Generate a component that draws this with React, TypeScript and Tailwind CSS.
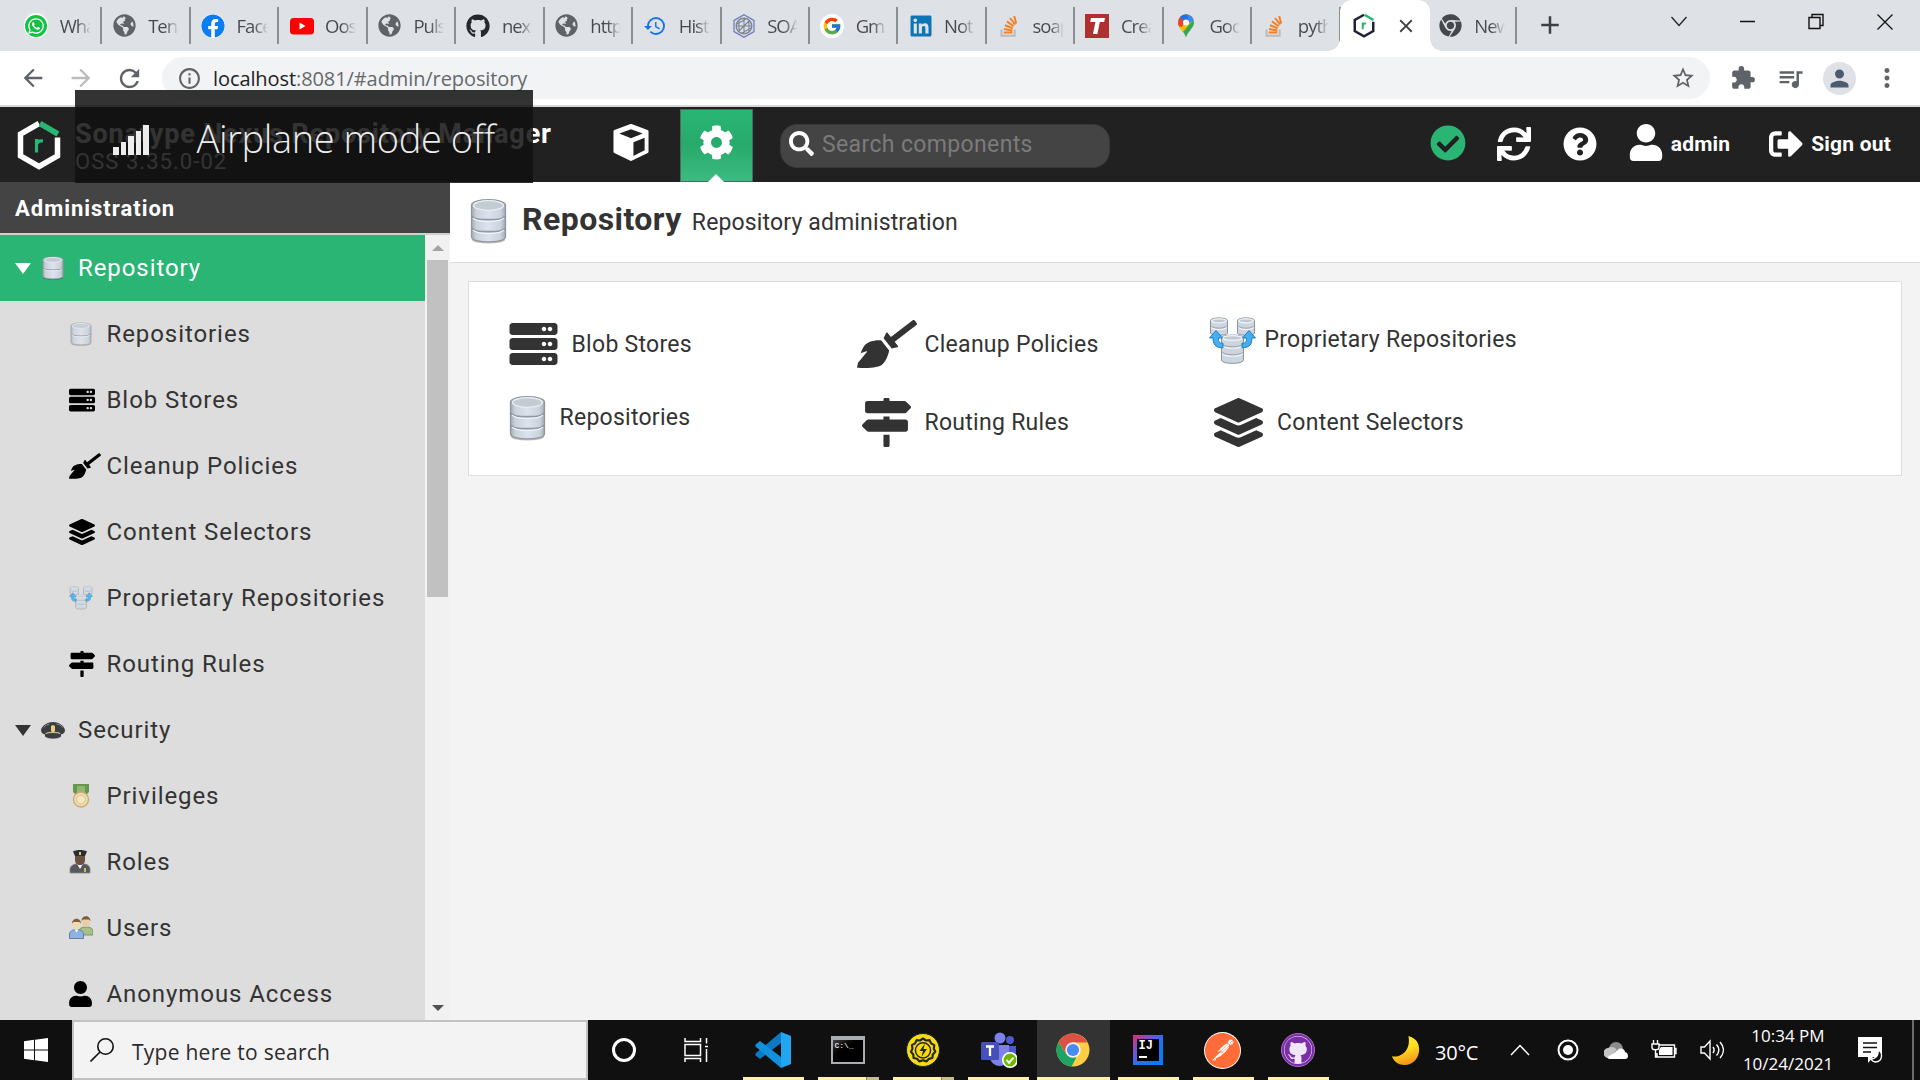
import React from 'react';
import { FaServer, FaBroom, FaMapSigns, FaLayerGroup, FaUser, FaCog, FaSearch, FaCheckCircle, FaSync, FaQuestionCircle, FaSignOutAlt, FaFacebook, FaGithub, FaWhatsapp, FaLinkedin, FaChrome, FaGlobeAmericas } from 'react-icons/fa';
import { MdHistory, MdExtension, MdQueueMusic, MdStarBorder, MdPerson, MdMoreVert, MdArrowBack, MdArrowForward, MdRefresh, MdInfoOutline, MdClose, MdAdd } from 'react-icons/md';
import { FcGoogle } from 'react-icons/fc';
import { SiPostman } from 'react-icons/si';

/* ---------- favicons ---------- */

function WhatsAppIcon() {
  return (
    <span className="flex size-[25px] items-center justify-center rounded-full bg-white">
      <span className="flex size-[22px] items-center justify-center rounded-full bg-[#12c244]">
        <FaWhatsapp className="size-[18px] text-white" />
      </span>
    </span>
  );
}

function YoutubeIcon() {
  return (
    <svg viewBox="0 0 24 24" className="size-6">
      <rect y="4" width="24" height="16.5" rx="3.5" fill="#f00" />
      <path d="M9.5 8.5v7l6-3.5z" fill="#fff" />
    </svg>
  );
}

function StackIcon() {
  return (
    <svg viewBox="0 0 24 24" className="size-6" fill="none" strokeWidth="2">
      <path d="M4.5 15.5v6.3h13.2v-6.3" stroke="#bcbbbb" />
      <path d="M6.8 18.6h8.6M7 15l8.4 1.4M7.9 11.2l7.8 3M9.9 7.4l6.8 4.8M13 4l5.2 6.7M17.2 2l2 7.6" stroke="#f48024" />
    </svg>
  );
}

function SoapIcon() {
  return (
    <svg viewBox="0 0 24 24" className="size-6" fill="none">
      <path d="M12 .8 22 6.4v11.2L12 23.2 2 17.6V6.4z" stroke="#6a78b8" strokeWidth="1.2" fill="#d9def0" />
      <circle cx="12" cy="12" r="7.8" stroke="#7f858c" strokeWidth="1.4" />
      <path d="M7 6.5v11M12 4.5v15M17 6.5v11M4.5 12h15M7 17l10-10M5 10l9-5M10 19l9-5" stroke="#7f858c" strokeWidth="1.1" />
    </svg>
  );
}

function RedTIcon() {
  return (
    <svg viewBox="0 0 24 24" className="size-6">
      <rect width="24" height="24" fill="#b03030" />
      <path d="M6 4h14l-.8 4h-4.4l-2.4 12H8l2.4-12H5.2z" fill="#fff" />
    </svg>
  );
}

function MapsIcon() {
  return (
    <svg viewBox="0 0 24 24" className="size-6">
      <defs>
        <clipPath id="pin">
          <path d="M12 .5a8 8 0 0 1 8 8c0 3-1.6 5-3.6 7.6-1.800 2.300-3.200 4.100-4.400 7.400-1.200-3.300-2.600-5.100-4.400-7.400C5.600 13.500 4 11.500 4 8.500a8 8 0 0 1 8-8z" />
        </clipPath>
      </defs>
      <g clipPath="url(#pin)">
        <rect width="24" height="24" fill="#34a853" />
        <path d="M0 0h24L4 24H0z" fill="#fbbc04" />
        <path d="M0 0h14L8 13 0 11z" fill="#ea4335" />
        <path d="M8 0h16v3L12 9 6 3z" fill="#1a73e8" />
        <path d="M13 0h11v4l-9 5z" fill="#4285f4" />
      </g>
      <circle cx="12" cy="8.500" r="3" fill="#fff" />
    </svg>
  );
}

function NexusMark({ dark = false, className }: { dark?: boolean; className: string }) {
  const main = dark ? '#20223a' : '#fff';
  return (
    <svg viewBox="0 0 44 50" className={className} fill="none">
      <path d="M22 3.500 3.500 14v22L22 46.500 40.500 36V17.500" stroke={main} strokeWidth={dark ? 5 : 5.500} />
      <path d="M23 3.500 41 14" stroke="#2ab574" strokeWidth={dark ? 5 : 5.500} />
      <path d="M19.500 32.500V19M19.500 25c.5-3 3-4.500 6.500-4" stroke="#2ab574" strokeWidth={dark ? 4 : 3.200} />
    </svg>
  );
}

const globe = <FaGlobeAmericas className="size-[23px] shrink-0 text-[#5f6368]" />;

const tabs = [
  { t: 'Wha', icon: <WhatsAppIcon /> },
  { t: 'Tena', icon: globe },
  { t: 'Face', icon: <FaFacebook className="size-6 rounded-full bg-white text-[#0a7cf5]" /> },
  { t: 'Oost', icon: <YoutubeIcon /> },
  { t: 'Puls', icon: globe },
  { t: 'nex', icon: <FaGithub className="size-6 text-[#24292e]" /> },
  { t: 'http', icon: globe },
  { t: 'Hist', icon: <MdHistory className="size-[24px] text-[#1a73e8]" /> },
  { t: 'SOA', icon: <SoapIcon /> },
  { t: 'Gm', icon: <span className="flex size-6 items-center justify-center rounded-full bg-white"><FcGoogle className="size-[20px]" /></span> },
  { t: 'Not', icon: <FaLinkedin className="size-6 text-[#0a76b5]" /> },
  { t: 'soap', icon: <StackIcon /> },
  { t: 'Crea', icon: <RedTIcon /> },
  { t: 'Goo', icon: <MapsIcon /> },
  { t: 'pyth', icon: <StackIcon /> },
];

function Tab({ t, icon }: { t: string; icon: React.ReactNode }) {
  return (
    <div className="flex h-[51px] w-[88.450px] shrink-0 items-center pl-[24.200px]">
      <span className="flex size-6 shrink-0 items-center justify-center">{icon}</span>
      <span className="ml-[11.500px] w-[31px] overflow-hidden whitespace-nowrap bg-linear-to-r from-[#45494d] from-55% to-transparent bg-clip-text text-[18.500px] tracking-[-1px] text-transparent">{t}</span>
      <span className="ml-auto -mr-[14px] h-[37px] w-[2px] shrink-0 bg-[#8b8f94]" />
    </div>
  );
}

function BrowserChrome() {
  return (
    <div className="font-['Open_Sans',sans-serif]">
      <div className="flex h-[51px] bg-[#dee1e6]">
        {tabs.map((x, i) => <Tab key={i} {...x} />)}
        <div className="relative ml-[13px] flex h-[51px] w-[90px] shrink-0 items-center rounded-t-[12px] bg-white pl-[12px]">
          <NexusMark dark className="h-[25px] w-6" />
          <MdClose className="ml-[19px] size-[22px] text-[#3c4043]" />
          <span className="absolute -left-3 bottom-0 size-3 bg-[radial-gradient(circle_at_0_0,transparent_11.500px,white_12px)]" />
          <span className="absolute -right-3 bottom-0 size-3 bg-[radial-gradient(circle_at_100%_0,transparent_11.500px,white_12px)]" />
        </div>
        <div className="-ml-[15px] flex"><Tab t="New" icon={<FaChrome className="size-[23px] text-[#45494d]" />} /></div>
        <MdAdd className="ml-[32px] mt-[10px] size-[30px] text-[#3c4043]" />
        <div className="ml-auto flex pt-[11px]">
          <svg viewBox="0 0 20 20" className="mr-[48px] size-5" fill="none" stroke="#222" strokeWidth="1.300"><path d="m2.500 6 7.500 8.500L17.500 6" /></svg>
          <svg viewBox="0 0 20 20" className="mr-[49px] size-5" fill="none" stroke="#111" strokeWidth="1.500"><path d="M3 10.500h15" /></svg>
          <svg viewBox="0 0 20 20" className="mr-[49px] size-5" fill="none" stroke="#111" strokeWidth="1.400"><path d="M3 6.500h11v11H3zM6 6.500v-3h11v11h-3" /></svg>
          <svg viewBox="0 0 20 20" className="mr-[25px] size-5" fill="none" stroke="#111" strokeWidth="1.300"><path d="m2.500 3.500 15 15m0-15-15 15" /></svg>
        </div>
      </div>
      <div className="flex h-[54px] items-center bg-white text-[#5f6368]">
        <MdArrowBack className="ml-[19px] size-[28px]" />
        <MdArrowForward className="ml-[20px] size-[28px] text-[#b9bbbe]" />
        <MdRefresh className="ml-[20px] size-[29px]" />
        <div className="ml-[18px] flex h-[42px] w-[1548px] items-center rounded-full bg-[#f1f3f4]">
          <MdInfoOutline className="ml-[15px] size-[25px]" />
          <span className="ml-[11px] mt-px text-[20px] tracking-[-0.090px] text-[#66696d]"><span className="text-[#202124]">localhost</span>:8081/#admin/repository</span>
          <MdStarBorder className="ml-auto mr-[14px] size-[26px]" />
        </div>
        <MdExtension className="ml-[20px] size-[26px]" />
        <MdQueueMusic className="ml-[20px] size-[29px]" />
        <span className="ml-[18px] flex size-[33px] items-center justify-center rounded-full bg-[#dee1e6]"><MdPerson className="size-[27px] text-[#4e5a70]" /></span>
        <MdMoreVert className="ml-[16px] size-[30px]" />
      </div>
      <div className="h-[2px] bg-[#d8d8d8]" />
    </div>
  );
}

/* ---------- application header ---------- */

function CubeIcon() {
  return (
    <svg viewBox="0 0 38 38" className="h-[37px] w-[38px]">
      <path d="M19 1.500 35.500 7.500v21L19 36.500 2.500 28.500v-21z" fill="#fff" stroke="#fff" strokeWidth="3" strokeLinejoin="round" />
      <path d="m19 5.500 12 4.300L19 14.600 7 9.800z" fill="#212121" />
      <path d="M21.500 18.800 33 14v13l-11.500 5.800z" fill="#212121" />
    </svg>
  );
}

function AppHeader() {
  return (
    <header className="flex h-[75px] items-center bg-[#212121] text-white">
      <NexusMark className="ml-[17px] h-[50px] w-[44px]" />
      <div className="ml-[14px] mt-[4px] w-[520px] whitespace-nowrap">
        <div className="text-[27px] leading-[30px] font-bold tracking-[0.840px]">Sonatype Nexus Repository Manager</div>
        <div className="text-[22px] leading-[25px] tracking-[1.050px]">OSS 3.35.0-02</div>
      </div>
      <div className="ml-[17px] -mt-[4px]"><CubeIcon /></div>
      <div className="relative ml-[30px] mt-px flex h-[73px] w-[73px] items-center justify-center border border-[#4d6b5d] bg-linear-to-b from-[#2ab574] via-[#27aa6c] to-[#3dbb82] pr-px pb-[5px]">
        <FaCog className="size-[35px]" />
        <svg viewBox="0 0 16 8" className="absolute -bottom-[1px] left-[27px] h-2 w-4"><path d="M0 8 8 0l8 8z" fill="#fff" /></svg>
      </div>
      <div className="ml-[27px] mt-[2px] flex h-[44px] w-[330px] items-center rounded-[17px] border border-[#383838] bg-[#444]">
        <FaSearch className="ml-[8px] -mt-[5px] size-[25px]" />
        <span className="ml-[8px] text-[23px] tracking-[0.360px] text-[#7b7b7b]">Search components</span>
      </div>
      <FaCheckCircle className="ml-auto -mt-[4px] size-[36px] text-[#2ab574]" />
      <FaSync className="ml-[31px] -mt-[2px] size-[34px]" />
      <FaQuestionCircle className="ml-[32px] -mt-[2px] size-[34px]" />
      <FaUser className="ml-[31px] -mt-[4px] h-[37px] w-[36px]" />
      <span className="ml-[7px] mt-[1px] text-[21px] font-bold tracking-[0.150px]">admin</span>
      <FaSignOutAlt className="ml-[39px] -mt-[2px] size-[34px]" />
      <span className="ml-[8px] mr-[29px] mt-[1px] text-[21px] font-bold tracking-[0.200px]">Sign out</span>
    </header>
  );
}

/* ---------- drawn icons of the feature list ---------- */

function Database({ className, bands = 3 }: { className: string; bands?: number }) {
  const h = bands === 3 ? 12 : 17;
  const top = [...Array(bands).keys()];
  return (
    <svg viewBox="0 0 36 46" preserveAspectRatio="none" className={className}>
      <defs>
        <linearGradient id="metal" x1="0" x2="1" y1="0" y2="0">
          <stop offset="0" stopColor="#a3abb3" />
          <stop offset=".14" stopColor="#cbd2dc" />
          <stop offset=".5" stopColor="#dde3ee" />
          <stop offset=".86" stopColor="#cbd2dc" />
          <stop offset="1" stopColor="#a3abb3" />
        </linearGradient>
      </defs>
      <ellipse cx="18" cy="42" rx="16" ry="3.500" fill="#000" opacity=".25" />
      <path d="M1.500 7C1.500 0 34.500 0 34.500 7v32c0 6.500-33 6.500-33 0z" fill="url(#metal)" stroke="#8f989f" strokeWidth="1.300" />
      {top.slice(1).map((i) => (
        <g key={i} fill="none">
          <path d={`M2 ${6 + i * h}c2 5 30 5 32 0`} stroke="#9099a2" strokeWidth="1.800" />
          <path d={`M3 ${8 + i * h}c3 4.500 27 4.500 30 0`} stroke="#f3f6fb" strokeWidth="1.300" />
        </g>
      ))}
      <ellipse cx="18" cy="7.500" rx="14.500" ry="4.800" fill="#c3cbd3" stroke="#e9eef3" strokeWidth="1.300" />
    </svg>
  );
}

function Proprietary({ className }: { className: string }) {
  const arrow = 'M6.500 13.500 0 21h3.700c-.4 6 2 9.800 9.800 9.800v-4.600c-4 0-4.800-1.600-4.400-5.200H13z';
  return (
    <svg viewBox="0 0 46 48" className={className}>
      <g stroke="#8b959e" fill="#cdd5df">
        <path d="M1 3.500c0-3.500 17-3.500 17 0V16c0 3-17 3-17 0zM28 3.500c0-3.500 17-3.500 17 0V16c0 3-17 3-17 0z" />
        <path d="M12 21c0-4 22-4 22 0v22c0 4.500-22 4.500-22 0z" />
      </g>
      <g fill="none" stroke="#f1f4f8" strokeWidth="1.200">
        <ellipse cx="9.500" cy="3.800" rx="7" ry="2" fill="#c0c9d1" />
        <ellipse cx="36.500" cy="3.800" rx="7" ry="2" fill="#c0c9d1" />
        <ellipse cx="23" cy="21" rx="9.500" ry="2.300" fill="#c0c9d1" />
        <path d="M2 10.500c3 2.500 12 2.500 15 0M29 10.500c3 2.500 12 2.500 15 0M13 29c3 3 17 3 20 0M13 37c3 3 17 3 20 0" />
      </g>
      <g fill="none" stroke="#98a2ab"><path d="M2 9.300c3 2.500 12 2.500 15 0M29 9.300c3 2.500 12 2.500 15 0M13 27.500c3 3 17 3 20 0M13 35.500c3 3 17 3 20 0" /></g>
      <path d={arrow} fill="#45aef0" stroke="#1f7fc0" />
      <path d={arrow} transform="matrix(-1 0 0 1 46 0)" fill="#45aef0" stroke="#1f7fc0" />
    </svg>
  );
}

function CapIcon() {
  return (
    <svg viewBox="0 0 24 24" className="size-6">
      <ellipse cx="12" cy="18.500" rx="8" ry="2.500" fill="#000" opacity=".25" />
      <path d="M0 12C1 7 7 4 12 4s11 3 12 8c0 3-2 4-4 4.500v2c-4 2.500-12 2.500-16 0v-2C2 16 0 15 0 12z" fill="#3a3d41" />
      <path d="M4.500 15.500c4-1.500 11-1.500 15 0" stroke="#c8b987" strokeWidth="1.300" fill="none" />
      <path d="M10 8 12 7l2 1v5l-2 2-2-2z" fill="#e9cf78" />
      <path d="M2.500 9.500c2-2.500 4-3 6-3.500M15.500 6c3 .5 5 1.500 6 3.500" stroke="#8a8d90" fill="none" />
    </svg>
  );
}

function MedalIcon() {
  return (
    <svg viewBox="0 0 24 24" className="size-6">
      <path d="M4 0h16v8l-4 4H8L4 8z" fill="#68964c" />
      <path d="M8 2h8v7H8z" fill="#8fb874" />
      <circle cx="12" cy="15.500" r="7.500" fill="#f0dfb0" stroke="#c9a874" strokeWidth="1.300" />
      <circle cx="12" cy="15.500" r="4.500" fill="#f5e7bd" stroke="#d9be86" />
    </svg>
  );
}

function OfficerIcon() {
  return (
    <svg viewBox="0 0 24 24" className="size-6">
      <path d="M1 23v-4c0-3 4-5 6-5h8c3 0 6 2 6 5v4z" fill="#55585c" stroke="#85888c" strokeWidth=".8" />
      <path d="m8 14 3 5 3-5z" fill="#f2f2f2" />
      <path d="M6 4h10v6c0 3-2 5-5 5s-5-2-5-5z" fill="#6b4f42" />
      <path d="M4 1.500C7-.5 15-.5 18 1.500L16 6H6z" fill="#2a2c2f" />
      <path d="M10 2h2v3h-2z" fill="#e6c860" />
      <path d="M15 18h2v4h-2z" fill="#d6ba56" />
    </svg>
  );
}

function UsersIcon() {
  return (
    <svg viewBox="0 0 24 24" className="size-6">
      <path d="M10 19v-4c0-2.500 3-4 7-4s7 1.500 7 4v4z" fill="#a9bf8a" stroke="#6f8752" strokeWidth=".8" />
      <ellipse cx="17" cy="6" rx="4.200" ry="5" fill="#e9cfa9" />
      <path d="M12.500 5c0-6.500 9-6.500 9 0l-1.500-1.500h-6z" fill="#7b5b3b" />
      <path d="M.5 22.500V18c0-2.500 3-4.500 7-4.500s7 2 7 4.500v4.500z" fill="#8fb3dc" stroke="#45709f" strokeWidth=".8" />
      <ellipse cx="7.500" cy="8.800" rx="4.300" ry="5" fill="#f0d9b5" />
      <path d="M3 7.500c0-6.500 9-6.500 9 0L10.500 6h-6z" fill="#80603f" />
      <path d="m5.500 13.500 2 3 2-3z" fill="#fff" />
    </svg>
  );
}

/* ---------- sidebar ---------- */

const items = [
  { t: 'Repositories', icon: <Database bands={2} className="ml-px h-6 w-[22px] opacity-80" /> },
  { t: 'Blob Stores', icon: <FaServer className="size-[26px]" /> },
  { t: 'Cleanup Policies', icon: <FaBroom className="h-[26px] w-[32px]" /> },
  { t: 'Content Selectors', icon: <FaLayerGroup className="size-[26px]" /> },
  { t: 'Proprietary Repositories', icon: <Proprietary className="size-6 opacity-85" /> },
  { t: 'Routing Rules', icon: <FaMapSigns className="size-[26px]" /> },
  { t: 'Security', group: true, icon: <CapIcon /> },
  { t: 'Privileges', icon: <MedalIcon /> },
  { t: 'Roles', icon: <OfficerIcon /> },
  { t: 'Users', icon: <UsersIcon /> },
  { t: 'Anonymous Access', icon: <FaUser className="h-[26px] w-[23px]" /> },
];

function Group({ t, icon, active }: { t: string; icon: React.ReactNode; active?: boolean }) {
  return (
    <div className={active ? 'flex h-[66px] shrink-0 items-center bg-[#2ab574] text-white' : 'flex h-[66px] shrink-0 items-center text-[#333]'}>
      <svg viewBox="0 0 16 11" className="ml-[15px] h-[11px] w-4"><path d="M0 0h16L8 11z" fill="currentColor" /></svg>
      <span className="ml-[10px] flex w-[37px]">{icon}</span>
      <span>{t}</span>
    </div>
  );
}

function Sidebar() {
  return (
    <aside className="flex w-[450px] shrink-0 flex-col">
      <div className="flex h-[51px] items-center bg-[#444] pt-px pl-[15px] text-[22px] font-bold tracking-[0.980px] text-white">Administration</div>
      <div className="h-[2px] bg-[#d0d0d0]" />
      <div className="flex min-h-0 flex-1">
        <nav className="flex w-[425px] flex-col overflow-hidden bg-[#ddd] text-[24px] tracking-[0.920px] text-[#333]">
          <Group active t="Repository" icon={<Database bands={2} className="ml-px h-6 w-[22px]" />} />
          {items.map((x) => x.group ? <Group key={x.t} t={x.t} icon={x.icon} /> : (
            <div key={x.t} className="flex h-[66px] shrink-0 items-center pl-[69px]">
              <span className="flex w-[37.500px] text-black">{x.icon}</span>
              <span>{x.t}</span>
            </div>
          ))}
        </nav>
        <div className="flex w-[25px] flex-col items-center bg-[#f1f1f1]">
          <svg viewBox="0 0 12 6" className="mt-[10px] h-[6px] w-[12px]"><path d="m0 6 6-6 6 6z" fill="#a3a3a3" /></svg>
          <div className="mt-[9px] h-[337px] w-[21px] bg-[#c1c1c1]" />
          <svg viewBox="0 0 12 6" className="mt-auto mb-[9px] h-[6px] w-[12px]"><path d="m0 0 6 6 6-6z" fill="#505050" /></svg>
        </div>
      </div>
    </aside>
  );
}

/* ---------- main panel ---------- */

const label = 'mt-[2px] text-[23px] leading-[28px] tracking-[0.280px]';
const labelHigh = 'text-[23px] leading-[28px] tracking-[0.260px]';

function Main() {
  return (
    <main className="flex-1 bg-[#f3f3f3] text-[#333]">
      <div className="flex h-[81px] items-center border-b border-[#ddd] bg-white pl-[20px]">
        <Database className="-mt-[3px] h-[46px] w-[37px]" />
        <h1 className="ml-[15px] -mt-[6px] text-[32px] font-bold tracking-[0.450px]">Repository</h1>
        <span className="ml-[10px] mt-[2px] text-[23px] tracking-[0.140px]">Repository administration</span>
      </div>
      <div className="ml-[18px] mt-[18px] flex h-[195px] w-[1434px] border border-[#ddd] bg-white pt-[36px] pl-[40px]">
        <div className="w-[348px]">
          <div className="flex h-[52px] items-center"><FaServer className="h-[48px] w-[49px]" /><span className={label + ' ml-[13.500px]'}>Blob Stores</span></div>
          <div className="mt-[24px] flex h-[48px] items-center"><Database className="h-[46px] w-[37px]" /><span className={labelHigh + ' ml-[13.500px]'}>Repositories</span></div>
        </div>
        <div className="w-[352px]">
          <div className="flex h-[52px] items-center"><FaBroom className="h-[48px] w-[60px]" /><span className={label + ' ml-[7.500px]'}>Cleanup Policies</span></div>
          <div className="mt-[26px] flex h-[52px] items-center"><FaMapSigns className="ml-[5px] size-[49px]" /><span className={label + ' ml-[13.500px]'}>Routing Rules</span></div>
        </div>
        <div>
          <div className="flex h-[44px] items-center"><Proprietary className="mt-px h-[48px] w-[47px]" /><span className={labelHigh + ' ml-[8.500px]'}>Proprietary Repositories</span></div>
          <div className="mt-[34px] flex h-[52px] items-center"><FaLayerGroup className="ml-[5px] size-[49px]" /><span className={label + ' ml-[14px]'}>Content Selectors</span></div>
        </div>
      </div>
    </main>
  );
}

/* ---------- taskbar ---------- */

function VsCode() {
  return (
    <svg viewBox="0 0 36 36" className="size-9">
      <path d="M26 0v11L5 27l-4.500-3.500v-2z" fill="#0d78c4" />
      <path d="M26 36V25L5 9 .5 12.500v2z" fill="#1390dc" />
      <path d="M26 0l10 4v28l-10 4z" fill="#24a5f2" />
    </svg>
  );
}
function Cmd() {
  return (
    <span className="block h-[28px] w-[34px] border-2 border-t-[4px] border-[#a7aeb4] bg-linear-to-br from-[#444] to-black to-50% pl-[2px]">
      <span className="block font-['Liberation_Mono',monospace] text-[8px] leading-[11px] font-bold text-[#ddd]">C:\_</span>
    </span>
  );
}
function Bolt() {
  return (
    <svg viewBox="0 0 36 36" className="size-9" fill="none">
      <circle cx="18" cy="18" r="16.500" fill="#fbd914" stroke="#0d2b3a" />
      <path d="M18 6.500l3 2 3.600-.3 1.500 3.200 3.200 1.700-.5 3.500 1.500 3.200-2.500 2.600-.4 3.600-3.500.9-2.500 2.500-3.400-1.200-3.500 1.200-2.400-2.600-3.500-.8-.3-3.600L6 19.800l1.500-3.200-.6-3.500 3.200-1.700 1.500-3.200 3.500.3z" stroke="#222b20" strokeWidth="2.200" strokeLinejoin="round" />
      <circle cx="18" cy="18.300" r="7.600" stroke="#222b20" strokeWidth="1.500" />
      <path d="m20 11.500-5.500 7.500h3.500l-1.500 6 5.500-8h-3.500z" fill="#222b20" />
    </svg>
  );
}
function Teams() {
  return (
    <svg viewBox="0 0 38 38" className="size-[38px]">
      <circle cx="21" cy="7" r="5.500" fill="#7b83eb" />
      <circle cx="31" cy="9" r="4" fill="#5059c9" />
      <path d="M26 15h11v11a6 6 0 0 1-11 3z" fill="#5059c9" />
      <path d="M11 14h19v13c0 10-17 11-19 0z" fill="#7b83eb" />
      <rect x="2" y="11" width="18" height="18" rx="1.500" fill="#4650b8" />
      <path d="M7 15.500h8M11 15.500V25" stroke="#fff" strokeWidth="2.300" />
      <circle cx="31" cy="29" r="7.200" fill="#6bb700" stroke="#fff" strokeWidth="1.600" />
      <path d="m27.500 29 2.500 2.700 4.500-5" stroke="#fff" strokeWidth="2" fill="none" />
    </svg>
  );
}
function Chrome() {
  return (
    <svg viewBox="0 0 34 34" className="size-[34px]">
      <circle cx="17" cy="17" r="16.500" fill="#ffce42" />
      <path d="M17 17 8.600 31.200A16.500 16.500 0 0 1 2.700 8.700L9.900 21.100z" fill="#1da362" />
      <path d="M9.900 21.100 17 17l3 8-4.300 8.400A16.500 16.500 0 0 1 8 31z" fill="#1da362" />
      <path d="M2.700 8.700A16.500 16.500 0 0 1 31.300 9.500H17l-7.100 11.600z" fill="#dd5144" />
      <circle cx="17" cy="17" r="7.700" fill="#f4f4f4" />
      <circle cx="17" cy="17" r="6.100" fill="#4a8af4" />
    </svg>
  );
}
function Idea() {
  return (
    <span className="block size-[30px] bg-[linear-gradient(135deg,#e0306a_0%,#6b57d8_35%,#1478f0_60%,#087cfa_100%)] p-[4px]">
      <span className="flex size-[22px] flex-col bg-black pl-[2px] pt-[1px] font-['Liberation_Mono',monospace] text-[12px] leading-[13px] font-bold text-white">IJ<span className="mt-[3px] h-[2px] w-[8px] bg-white" /></span>
    </span>
  );
}
function Cat() {
  return <span className="flex size-[34px] items-center justify-center rounded-full border border-[#a36fc4] bg-[#7a2fa5]"><FaGithub className="size-[28px] rounded-full bg-[#f0e8f6] text-[#7a2fa5]" /></span>;
}

const apps = [
  { icon: <VsCode /> },
  { icon: <Cmd />, stacked: true },
  { icon: <Bolt />, stacked: true },
  { icon: <Teams /> },
  { icon: <Chrome />, active: true },
  { icon: <Idea /> },
  { icon: <span className="flex size-[37px] items-center justify-center rounded-full bg-white"><SiPostman className="size-[35px] text-[#ff6c37]" /></span> },
  { icon: <Cat /> },
];

function Taskbar() {
  return (
    <footer className="flex h-[60px] items-center bg-[#101010] font-['Open_Sans',sans-serif] text-white">
      <svg viewBox="0 0 24 24" className="ml-6 size-6" fill="#fff"><path d="M0 3.200 10 1.800v9.700H0zM11 1.700 24 0v11.500H11zM0 12.500h10v9.700L0 20.800zM11 12.500h13V24l-13-1.700z" /></svg>
      <div className="ml-[24px] flex h-[60px] w-[516px] items-center border-2 border-[#c2c2c2] bg-[#f3f3f3]">
        <svg viewBox="0 0 24 24" className="ml-4 size-6" fill="none" stroke="#111" strokeWidth="1.600"><circle cx="15.500" cy="8.500" r="7.700" /><path d="M10 14 .5 23.500" /></svg>
        <span className="ml-[18px] mt-[5px] text-[21px] tracking-[0.260px] text-[#2b2b2b]">Type here to search</span>
      </div>
      <div className="flex w-[72px] justify-center"><span className="size-6 rounded-full border-[3px] border-white" /></div>
      <div className="flex w-[76px] justify-center pr-1">
        <svg viewBox="0 0 26 26" className="size-[26px]" fill="none" stroke="#fff" strokeWidth="1.500"><path d="M2 1v3.500h15.500V1M2 25v-3.500h15.500V25M2 7.500h15.500v11H2zM23.500 1v5.500M23.500 12v13M22 9.500h3" /></svg>
      </div>
      {apps.map((a, i) => (
        <div key={i} className={a.active ? 'flex h-[60px] w-[75px] flex-col items-center border-x border-[#101010] bg-[#333]' : 'flex h-[60px] w-[75px] flex-col items-center'}>
          <div className="flex h-[57px] items-center pt-[3px] pr-[2px]">{a.icon}</div>
          <div className={a.active ? 'flex h-[3px] w-full bg-[#fff0b0]' : 'flex h-[3px] w-[61px] bg-[#fff0b0]'}>
            {a.stacked && <span className="ml-auto h-[3px] w-[13px] border-l border-[#8c8565] bg-[#c7bc8c]" />}
          </div>
        </div>
      ))}
      <svg viewBox="0 0 30 32" className="ml-[55px] h-[31px] w-[29px]">
        <defs><linearGradient id="moon" x1="0" y1="0" x2=".3" y2="1"><stop offset="0" stopColor="#fff23a" /><stop offset=".55" stopColor="#ffdc1e" /><stop offset="1" stopColor="#f79a1c" /></linearGradient></defs>
        <path d="M18 1c8 2 12 8 11 16-1 8-7 14-15 14-6 0-11-3-13-9 10 2 20-7 17-21z" fill="url(#moon)" />
      </svg>
      <span className="ml-[15px] mt-[5px] w-[75px] text-[20px] tracking-[-0.200px]">30°C</span>
      <svg viewBox="0 0 20 12" className="h-3 w-5" fill="none" stroke="#fff" strokeWidth="1.500"><path d="m1 11 9-9.500L19 11" /></svg>
      <svg viewBox="0 0 22 22" className="ml-[27px] size-[22px]" fill="none" stroke="#fff" strokeWidth="2"><circle cx="11" cy="11" r="9.500" /><circle cx="11" cy="11" r="5" fill="#fff" stroke="none" /></svg>
      <svg viewBox="0 0 24 18" className="ml-[25px] h-[18px] w-6">
        <path d="M5 8a7 7 0 0 1 14 0l-4 4z" fill="#8b8b8b" />
        <path d="M5 17a5 5 0 0 1-1-10c3-2 7-1 9 2l-9 8z" fill="#c4c4c4" />
        <path d="M3 16.500 14 9c2-3 7-1 7 2 4 1 4 7 0 7H5z" fill="#fff" />
      </svg>
      <svg viewBox="0 0 26 20" className="ml-[23px] h-5 w-[26px]" fill="none" stroke="#fff" strokeWidth="1.400"><path d="M8 5h15.500v12H6v-4M23.500 8.500H25v5h-1.500M2.500 0v4M6.500 0v4M1 4h7v3.500c0 3-7 3-7 0zM4.500 10v7H7" /><path d="M10 7h11.500v8H8V10z" fill="#fff" stroke="none" /></svg>
      <svg viewBox="0 0 24 22" className="ml-[23px] h-[22px] w-6" fill="none" stroke="#fff" strokeWidth="1.400"><path d="M1 8h3.500L10 2v18l-5.500-6H1zM13 8c1.500 2 1.500 4 0 6M16.500 5.500c3 3.500 3 7.500 0 11M20 3c4.500 5 4.500 11 0 16" /></svg>
      <div className="ml-[17px] w-[94px] text-center text-[17px] leading-[28px] whitespace-nowrap">
        <div>10:34 PM</div>
        <div>10/24/2021</div>
      </div>
      <svg viewBox="0 0 26 28" className="ml-[23px] h-7 w-[26px]"><path d="M0 1h24v20h-9l-5 6v-6H0z" fill="#fff" /><path d="M5 7h14M5 11.500h14M5 16h8" stroke="#101010" strokeWidth="1.500" /><path d="M20 14c5 2 5 11-2 12-3 0-4-1-5-3 4 0 8-3 7-9z" fill="#101010" stroke="#fff" strokeWidth="1.300" /></svg>
      <span className="ml-auto mr-[6px] h-[60px] w-[2px] bg-[#6b6b6b]" />
    </footer>
  );
}

function AirplaneToast() {
  return (
    <div className="absolute top-[90px] left-[75px] flex h-[93px] w-[458px] items-center bg-[#0f0f0f]/85 pl-[38px] font-['Open_Sans',sans-serif] text-[#ececec]">
      <div className="mt-[7px] flex h-[30px] items-end gap-[2px]">
        <span className="h-[8px] w-[5.500px] bg-current" />
        <span className="h-[13px] w-[5.500px] bg-current" />
        <span className="h-[19px] w-[5.500px] bg-current" />
        <span className="h-[24px] w-[5.500px] bg-current" />
        <span className="h-[30px] w-[5.500px] bg-current" />
      </div>
      <span className="ml-[48px] mt-[3px] text-[38px] font-light tracking-[-0.400px] whitespace-nowrap">Airplane mode off</span>
    </div>
  );
}

export default function App() {
  return (
    <div className="relative flex h-[1080px] w-[1920px] flex-col overflow-hidden bg-[#f3f3f3] font-[Roboto,sans-serif]">
      <BrowserChrome />
      <AppHeader />
      <div className="flex min-h-0 flex-1">
        <Sidebar />
        <Main />
      </div>
      <Taskbar />
      <AirplaneToast />
    </div>
  );
}
